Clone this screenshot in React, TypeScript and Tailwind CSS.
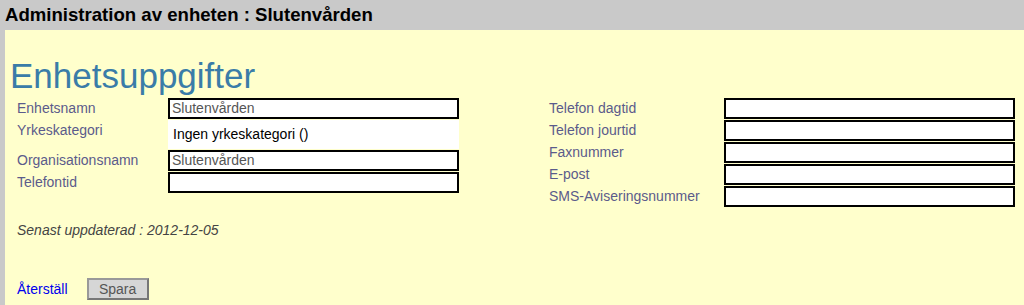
import React from "react";

const font = { fontFamily: '"Liberation Sans", Arial, sans-serif' };

function Box({ value }: { value?: string }) {
  return (
    <div className="h-[21px] w-[291px] border-2 border-black bg-white pl-[2px] text-[14px] leading-[17px] text-[#555]">
      {value}
    </div>
  );
}

function Row({ label, children, h = "h-[22px]", labelW }: { label: string; children: React.ReactNode; h?: string; labelW: string }) {
  return (
    <div className={`flex items-start ${h}`}>
      <div className={`${labelW} h-[21px] flex items-center text-[14px] text-[#5b5b8b]`}>{label}</div>
      {children}
    </div>
  );
}

export default function App() {
  return (
    <div className="w-[1024px] h-[305px] overflow-hidden bg-[#c9c9c9]" style={font}>
      <div className="h-[30px] pl-[5px] pt-[4px] text-[18.6px] font-bold leading-[22px] text-black">
        Administration av enheten : Slutenvården
      </div>
      <div className="ml-[5px] h-[275px] bg-[#ffffcc]">
        <div className="pl-[5px] pt-[28px] text-[35px] leading-[36px] text-[#3a7ca8]">Enhetsuppgifter</div>
        <div className="mt-[4px] flex items-start pl-[12px]">
          <div className="flex flex-col">
            <Row label="Enhetsnamn" labelW="w-[151px]"><Box value="Slutenvården" /></Row>
            <Row label="Yrkeskategori" labelW="w-[151px]" h="h-[30px]">
              <div className="h-[29px] w-[291px] bg-white pl-[5px] flex items-center text-[14px] text-black">
                Ingen yrkeskategori ()
              </div>
            </Row>
            <Row label="Organisationsnamn" labelW="w-[151px]"><Box value="Slutenvården" /></Row>
            <Row label="Telefontid" labelW="w-[151px]"><Box /></Row>
          </div>
          <div className="ml-[90px] flex flex-col">
            <Row label="Telefon dagtid" labelW="w-[175px]"><Box /></Row>
            <Row label="Telefon jourtid" labelW="w-[175px]"><Box /></Row>
            <Row label="Faxnummer" labelW="w-[175px]"><Box /></Row>
            <Row label="E-post" labelW="w-[175px]"><Box /></Row>
            <Row label="SMS-Aviseringsnummer" labelW="w-[175px]"><Box /></Row>
          </div>
        </div>
        <div className="mt-[15px] pl-[12px] text-[14px] leading-[15px] italic text-[#444]">
          Senast uppdaterad : 2012-12-05
        </div>
        <div className="mt-[40px] pl-[12px] flex items-baseline gap-[19px] text-[14px]">
          <a href="#" className="text-[#0000ee]">Återställ</a>
          <button className="h-[22px] w-[62px] border-2 border-[#777] border-t-[#999] border-l-[#999] bg-[#d6d6d6] text-[14px] text-[#555] leading-[16px]" style={font}>
            Spara
          </button>
        </div>
      </div>
    </div>
  );
}
